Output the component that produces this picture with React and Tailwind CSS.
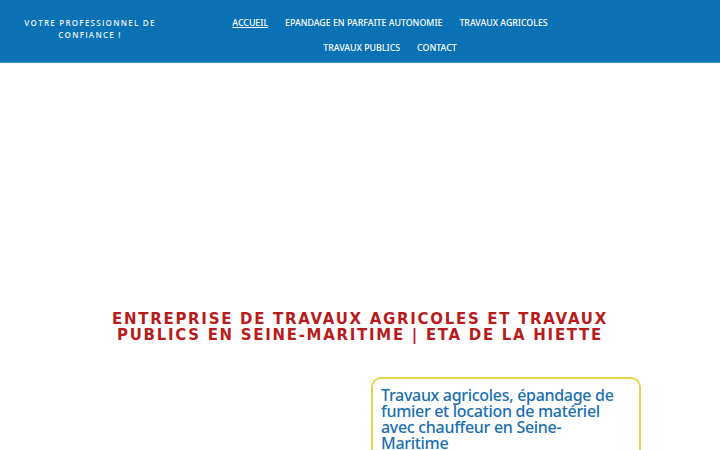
export default function App() {
  return (
    <div className="w-[720px] h-[450px] overflow-hidden bg-white" style={{ fontFamily: '"Noto Sans", sans-serif' }}>
      <header className="h-[63px] bg-[#0a72b4] border-b border-[#3f93c9] flex">
        <div className="w-[180px] pt-[17px] text-center text-[8px] leading-[12px] tracking-[1.25px] text-[#e8f1f8] font-semibold" style={{ fontFamily: '"Open Sans", sans-serif' }}>
          VOTRE PROFESSIONNEL DE<br />CONFIANCE !
        </div>
        <nav className="w-[420px] flex flex-col items-center pt-[17px] text-[8.8px] text-white font-medium" style={{ fontFamily: '"Noto Sans", sans-serif' }}>
          <div className="flex gap-[17px] leading-[13px]">
            <span className="underline">ACCUEIL</span>
            <span>EPANDAGE EN PARFAITE AUTONOMIE</span>
            <span>TRAVAUX AGRICOLES</span>
          </div>
          <div className="flex gap-[17px] leading-[13px] mt-[12px]">
            <span>TRAVAUX PUBLICS</span>
            <span>CONTACT</span>
          </div>
        </nav>
      </header>
      <div className="h-[248px]" />
      <h1 className="text-center text-[#b71c1c] text-[15px] leading-[16px] font-bold tracking-[1.7px] uppercase" style={{ fontFamily: '"DejaVu Sans", sans-serif' }}>
        <span className="block">Entreprise de travaux agricoles et travaux</span>
        <span className="block">publics en Seine-Maritime | ETA de la Hiette</span>
      </h1>
      <div className="flex justify-end pr-[79px] mt-[34px]">
        <div className="w-[270px] h-[100px] border-2 border-[#e6d54a] rounded-[10px] pl-[8px] pr-[20px] pt-[8px]">
          <p className="text-[#1a6fb0] text-[16px] leading-[16px] font-medium tracking-[-0.3px]" style={{ fontFamily: '"Noto Sans", sans-serif' }}>
            Travaux agricoles, épandage de fumier et location de matériel avec chauffeur en Seine-Maritime
          </p>
        </div>
      </div>
    </div>
  );
}
